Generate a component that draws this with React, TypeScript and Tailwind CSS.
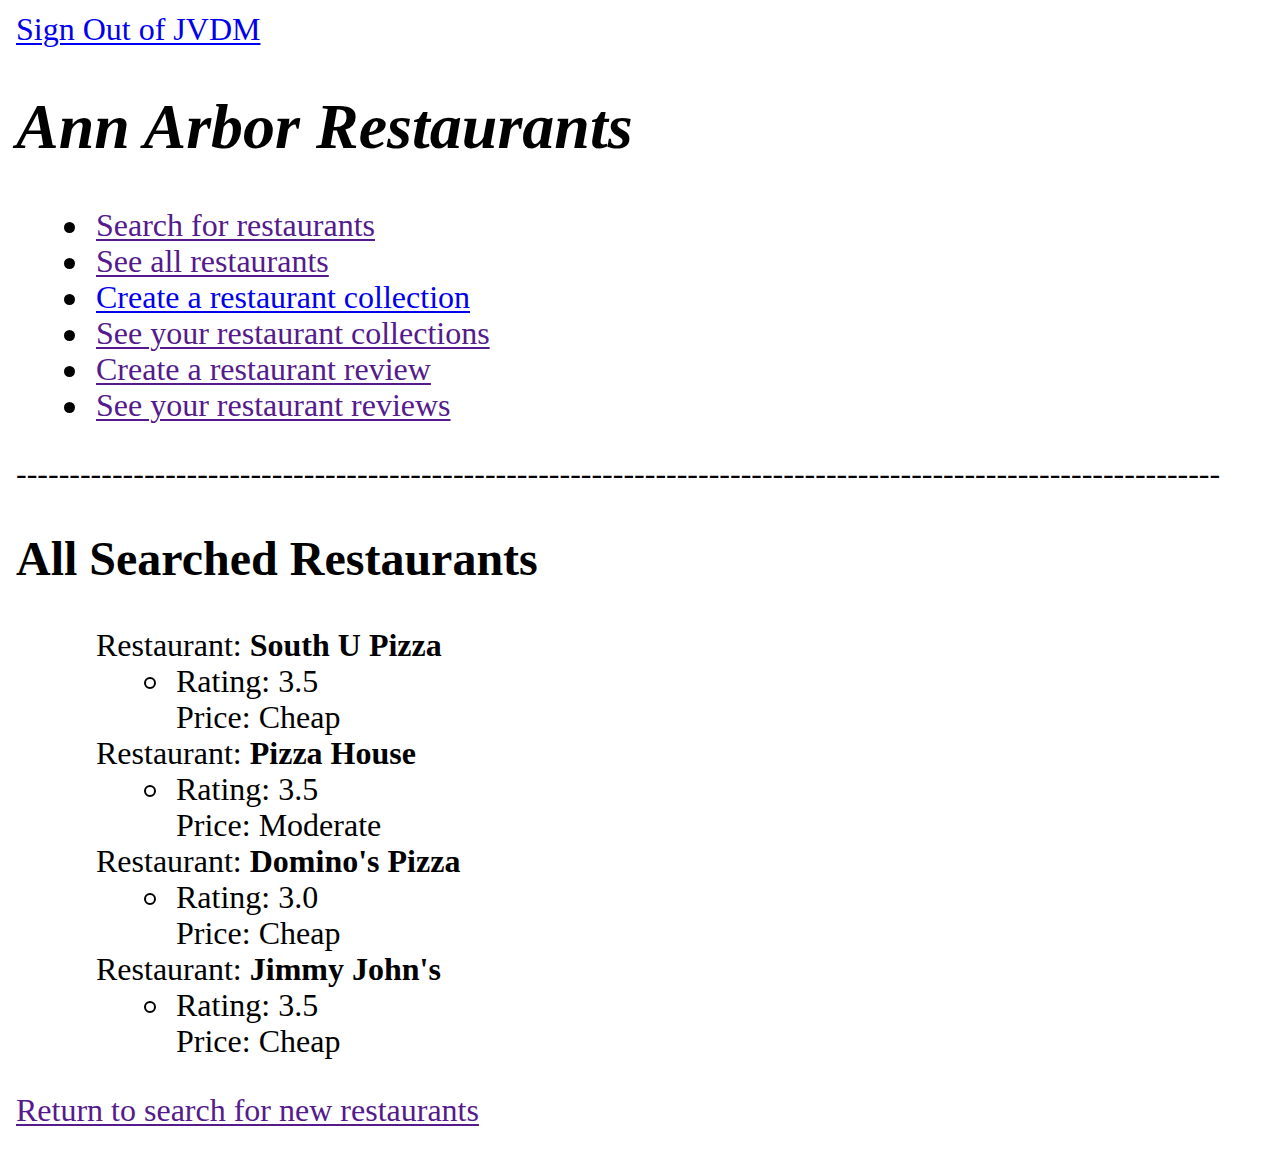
import React from "react";

const serif = { fontFamily: '"Liberation Serif", "Times New Roman", serif' };

const blue = "text-[#0000ee] underline decoration-2 underline-offset-[3px]";
const purple = "text-[#551a8b] underline decoration-2 underline-offset-[3px]";

const navItems: { label: string; visited: boolean }[] = [
  { label: "Search for restaurants", visited: true },
  { label: "See all restaurants", visited: true },
  { label: "Create a restaurant collection", visited: false },
  { label: "See your restaurant collections", visited: true },
  { label: "Create a restaurant review", visited: true },
  { label: "See your restaurant reviews", visited: true },
];

const restaurants = [
  { name: "South U Pizza", rating: "3.5", price: "Cheap" },
  { name: "Pizza House", rating: "3.5", price: "Moderate" },
  { name: "Domino's Pizza", rating: "3.0", price: "Cheap" },
  { name: "Jimmy John's", rating: "3.5", price: "Cheap" },
];

export default function App() {
  return (
    <div
      className="bg-white text-black px-4 pt-[11px] pb-8 text-[32px] leading-[36px] min-h-[1150px]"
      style={serif}
    >
      <a href="#" className={blue}>
        Sign Out of JVDM
      </a>
      <h1 className="mt-[43px] mb-[43px] text-[64px] leading-[74px] font-bold italic">
        Ann Arbor Restaurants
      </h1>
      <ul className="list-none">
        {navItems.map((n) => (
          <li key={n.label} className="flex">
            <span className="w-[80px] h-[36px] shrink-0 flex items-center justify-end pr-[21px]">
              <span className="block w-[11px] h-[11px] mt-[4px] rounded-full bg-black" />
            </span>
            <a href="#" className={n.visited ? purple : blue}>
              {n.label}
            </a>
          </li>
        ))}
      </ul>
      <p className="mt-[32px] whitespace-nowrap">{"-".repeat(113)}</p>
      <h2 className="mt-[40px] mb-[41px] text-[48px] leading-[55px] font-bold">
        All Searched Restaurants
      </h2>
      <div className="pl-[80px]">
        {restaurants.map((r) => (
          <div key={r.name}>
            <div>
              Restaurant: <b>{r.name}</b>
            </div>
            <ul className="list-none">
              <li className="flex">
                <span className="w-[80px] h-[36px] shrink-0 flex items-center justify-end pr-[20px]">
                  <span className="block w-[12px] h-[12px] mt-[3px] rounded-full border-2 border-black" />
                </span>
                <span>
                  Rating: {r.rating}
                  <br />
                  Price: {r.price}
                </span>
              </li>
            </ul>
          </div>
        ))}
      </div>
      <p className="mt-[33px]">
        <a href="#" className={purple}>
          Return to search for new restaurants
        </a>
      </p>
    </div>
  );
}
